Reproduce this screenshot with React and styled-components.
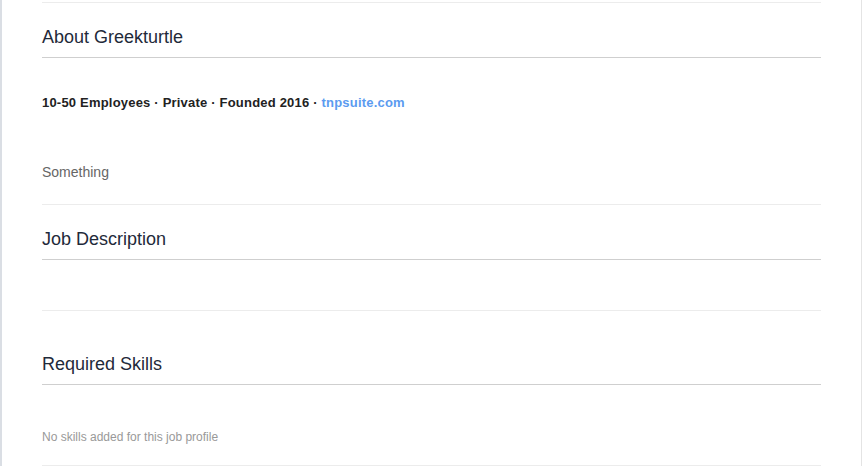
import React from "react";
import styled, { createGlobalStyle } from "styled-components";

const GlobalStyle = createGlobalStyle`
  html, body {
    margin: 0;
    padding: 0;
    background: #fff;
    font-family: "Liberation Sans", Arial, sans-serif;
  }
`;

const Card = styled.div`
  width: 862px;
  box-sizing: border-box;
  height: 466px;
  overflow: hidden;
  border-left: 2px solid #dadee4;
  border-right: 1px solid #e4e4e4;
  padding: 2px 40px 0 40px;
  background: #fff;
`;

const Divider = styled.hr`
  margin: 0;
  border: none;
  border-top: 1px solid #ececec;
`;

const Section = styled.section`
  padding-top: ${(p) => p.$top || 24}px;
`;

const Title = styled.h2`
  margin: 0;
  font-size: 18px;
  line-height: 20px;
  font-weight: 400;
  color: #1f2a3a;
  padding-bottom: 10px;
  border-bottom: 1px solid #cfcfcf;
`;

const Meta = styled.p`
  margin: 36px 0 0;
  font-size: 13px;
  line-height: 18px;
  font-weight: 700;
  letter-spacing: 0.2px;
  color: #222;
`;

const Link = styled.a`
  color: #5b9bf0;
  text-decoration: none;
`;

const Body = styled.p`
  margin: 50px 0 22px;
  font-size: 14px;
  line-height: 20px;
  color: #666;
`;

const Empty = styled.div`
  height: 50px;
`;

const Muted = styled.p`
  margin: 44px 0 20px;
  font-size: 12px;
  line-height: 16px;
  color: #999;
`;

export default function App() {
  return (
    <>
      <GlobalStyle />
      <Card>
        <Divider />
        <Section>
          <Title>About Greekturtle</Title>
          <Meta>
            10-50 Employees · Private · Founded 2016 ·{" "}
            <Link href="#">tnpsuite.com</Link>
          </Meta>
          <Body>Something</Body>
        </Section>
        <Divider />
        <Section>
          <Title>Job Description</Title>
          <Empty />
        </Section>
        <Divider />
        <Section $top={43}>
          <Title>Required Skills</Title>
          <Muted>No skills added for this job profile</Muted>
        </Section>
        <Divider />
      </Card>
    </>
  );
}
